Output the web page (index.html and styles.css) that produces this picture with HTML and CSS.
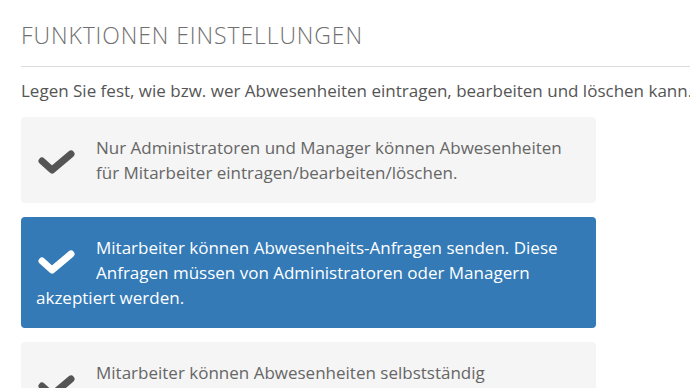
FILE: index.html
```html
<!DOCTYPE html>
<html lang="de">
<head>
  <meta charset="UTF-8">
  <meta name="viewport" content="width=device-width, initial-scale=1.0">
  <title>Funktionen Einstellungen</title>
  <link rel="stylesheet" href="styles.css">
</head>
<body>
  <div class="settings">
    <!-- Titel -->
    <h2 class="settings-title">FUNKTIONEN EINSTELLUNGEN</h2>
    <p class="settings-intro">Legen Sie fest, wie bzw. wer Abwesenheiten eintragen, bearbeiten und löschen kann.</p>

    <!-- Auswahl -->
    <div class="option">
      <svg class="check" viewBox="0 0 37 27"><polyline points="4,12 14,21 33,5"/></svg>
      Nur Administratoren und Manager können Abwesenheiten für Mitarbeiter eintragen/bearbeiten/löschen.
    </div>
    <div class="option active">
      <svg class="check" viewBox="0 0 37 27"><polyline points="4,12 14,21 33,5"/></svg>
      Mitarbeiter können Abwesenheits-Anfragen senden. Diese Anfragen müssen von Administratoren oder Managern akzeptiert werden.
    </div>
    <div class="option">
      <svg class="check" viewBox="0 0 37 27"><polyline points="4,12 14,21 33,5"/></svg>
      Mitarbeiter können Abwesenheiten selbstständig eintragen, bearbeiten und löschen.
    </div>
  </div>
</body>
</html>
```

FILE: styles.css
```css
body {
  margin: 0;
  font-family: 'Open Sans', sans-serif;
  color: #555;
  background: #fff;
  overflow: hidden;
}

.settings {
  padding: 0 0 0 21px;
}

/* Titel mit Trennlinie */
.settings-title {
  margin: 0;
  padding: 22px 0 17px;
  font-size: 23px;
  font-weight: 300;
  letter-spacing: 0.9px;
  color: #707070;
  line-height: 27px;
  border-bottom: 1px solid #ddd;
}

.settings-intro {
  margin: 0;
  padding: 13px 0 15px;
  font-size: 17px;
  line-height: 22px;
  white-space: nowrap;
}

/* Optionen */
.option {
  width: 530px;
  padding: 18px 30px 18px 15px;
  margin-bottom: 14px;
  background: #f5f5f5;
  border-radius: 4px;
  font-size: 17px;
  line-height: 25px;
  color: #666;
}

.option.active {
  background: #337ab7;
  color: #fff;
}

.check {
  float: left;
  width: 37px;
  height: 27px;
  margin: 14px 21px 0 2px;
  fill: none;
  stroke: #555;
  stroke-width: 7;
  stroke-linejoin: round;
  stroke-linecap: round;
}

.option.active .check {
  stroke: #fff;
}
```
